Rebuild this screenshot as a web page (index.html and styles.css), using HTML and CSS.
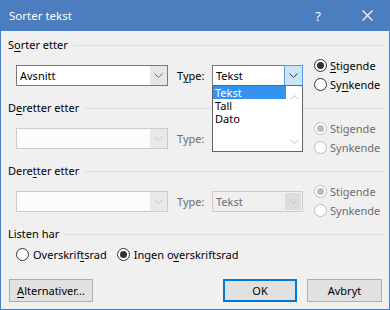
FILE: index.html
```html
<!DOCTYPE html>
<html lang="nb">
<head>
    <meta charset="UTF-8">
    <title>Sorter tekst</title>
    <link rel="stylesheet" href="styles.css">
</head>
<body>
    <div class="dialog">
        <div class="titlebar">
            <span class="title">Sorter tekst</span>
            <span class="help">?</span>
            <span class="close">
                <svg width="11" height="11" viewBox="0 0 11 11"><path d="M0.5 0.5 L10.5 10.5 M10.5 0.5 L0.5 10.5" stroke="#fff" stroke-width="1.1" fill="none"/></svg>
            </span>
        </div>

        <div class="content">
            <div class="group-head">S<u>o</u>rter etter</div>
            <div class="sort-row">
                <div class="combo">
                    <span class="combo-value">Avsnitt</span>
                    <span class="combo-btn"><svg width="9" height="5" viewBox="0 0 9 5"><polyline points="0.5,0.5 4.5,4.5 8.5,0.5" stroke="#707070" fill="none"/></svg></span>
                </div>
                <span class="type-label">T<u>y</u>pe:</span>
                <div class="combo combo-type combo-open">
                    <span class="combo-value">Tekst</span>
                    <span class="combo-btn"><svg width="9" height="5" viewBox="0 0 9 5"><polyline points="0.5,0.5 4.5,4.5 8.5,0.5" stroke="#3a3a3a" fill="none"/></svg></span>
                    <div class="dropdown">
                        <ul class="dropdown-items">
                            <li class="selected">Tekst</li>
                            <li>Tall</li>
                            <li>Dato</li>
                        </ul>
                        <div class="scrollbar">
                            <svg width="9" height="5" viewBox="0 0 9 5"><polyline points="0.5,4.5 4.5,0.5 8.5,4.5" stroke="#c2c2c2" fill="none"/></svg>
                            <svg width="9" height="5" viewBox="0 0 9 5"><polyline points="0.5,0.5 4.5,4.5 8.5,0.5" stroke="#c2c2c2" fill="none"/></svg>
                        </div>
                    </div>
                </div>
                <div class="order">
                    <div class="radio"><span class="dot checked"></span><span><u>S</u>tigende</span></div>
                    <div class="radio"><span class="dot"></span><span>Sy<u>n</u>kende</span></div>
                </div>
            </div>

            <div class="group-head spaced">D<u>e</u>retter etter</div>
            <div class="sort-row">
                <div class="combo disabled">
                    <span class="combo-value"></span>
                    <span class="combo-btn"><svg width="9" height="5" viewBox="0 0 9 5"><polyline points="0.5,0.5 4.5,4.5 8.5,0.5" stroke="#c4c4c4" fill="none"/></svg></span>
                </div>
                <span class="type-label disabled-text">Type:</span>
                <div class="combo combo-type disabled list-style">
                    <span class="combo-value">Tekst</span>
                    <span class="combo-btn"><svg width="9" height="5" viewBox="0 0 9 5"><polyline points="0.5,0.5 4.5,4.5 8.5,0.5" stroke="#c4c4c4" fill="none"/></svg></span>
                </div>
                <div class="order disabled-text">
                    <div class="radio"><span class="dot checked off"></span><span>Stigende</span></div>
                    <div class="radio"><span class="dot off"></span><span>Synkende</span></div>
                </div>
            </div>

            <div class="group-head spaced">Dere<u>t</u>ter etter</div>
            <div class="sort-row">
                <div class="combo disabled">
                    <span class="combo-value"></span>
                    <span class="combo-btn"><svg width="9" height="5" viewBox="0 0 9 5"><polyline points="0.5,0.5 4.5,4.5 8.5,0.5" stroke="#c4c4c4" fill="none"/></svg></span>
                </div>
                <span class="type-label disabled-text">Type:</span>
                <div class="combo combo-type disabled list-style">
                    <span class="combo-value">Tekst</span>
                    <span class="combo-btn"><svg width="9" height="5" viewBox="0 0 9 5"><polyline points="0.5,0.5 4.5,4.5 8.5,0.5" stroke="#c4c4c4" fill="none"/></svg></span>
                </div>
                <div class="order disabled-text">
                    <div class="radio"><span class="dot checked off"></span><span>Stigende</span></div>
                    <div class="radio"><span class="dot off"></span><span>Synkende</span></div>
                </div>
            </div>

            <div class="group-head spaced">Listen har</div>
            <div class="header-row">
                <div class="radio"><span class="dot"></span><span>Overskrif<u>t</u>srad</span></div>
                <div class="radio"><span class="dot checked"></span><span>Ingen o<u>v</u>erskriftsrad</span></div>
            </div>

            <div class="buttons">
                <button class="btn btn-options"><u>A</u>lternativer...</button>
                <button class="btn btn-ok">OK</button>
                <button class="btn btn-cancel">Avbryt</button>
            </div>
        </div>
    </div>
</body>
</html>
```

FILE: styles.css
```css
body {
    margin: 0;
    font-family: "Noto Sans", "Open Sans", sans-serif;
    font-size: 11px;
    color: #000;
    background-color: #f0f0f0;
}

.dialog {
    width: 390px;
    height: 310px;
    box-sizing: border-box;
    border: 1px solid #4b7dbf;
    border-top: none;
    background-color: #f0f0f0;
}

/* title bar */
.titlebar {
    height: 31px;
    margin: 0 -1px;
    background-color: #4b7dbf;
    color: #fff;
    display: flex;
    align-items: center;
}
.title {
    flex: 1;
    padding-left: 9px;
    font-size: 11.5px;
}
.help {
    width: 14px;
    font-size: 13px;
    margin-right: 37px;
    text-align: center;
}
.close {
    display: flex;
    margin-right: 17px;
}

.content {
    padding: 6px 5px 0 7px;
}

/* section headings with rule */
.group-head {
    display: flex;
    align-items: center;
    height: 16px;
    line-height: 16px;
}
.group-head::after {
    content: "";
    flex: 1;
    height: 1px;
    margin-left: 6px;
    background-color: #dcdcdc;
}
.group-head.spaced {
    margin-top: 6px;
}

u {
    text-decoration-thickness: 1px;
    text-underline-offset: 2px;
}

/* sort key rows */
.sort-row {
    display: flex;
    align-items: center;
    margin-top: 3px;
    padding-left: 8px;
}
.combo {
    position: relative;
    width: 152px;
    height: 21px;
    box-sizing: border-box;
    border: 1px solid #7a7a7a;
    background-color: #fff;
    display: flex;
}
.combo-value {
    flex: 1;
    padding-left: 3px;
    line-height: 19px;
}
.combo-btn {
    width: 17px;
    background-color: #e6e6e6;
    display: flex;
    align-items: center;
    justify-content: center;
}
.combo-type {
    width: 91px;
}
.combo-open .combo-btn {
    background-color: #cce4f7;
    border: 1px solid #569de5;
    margin: -1px -1px -1px 0;
}
.combo.disabled {
    border-color: #cccccc;
    background-color: #fcfcfc;
}
.combo.disabled .combo-btn {
    background-color: #e9e9e9;
}
.combo.list-style {
    background-color: #efefef;
    color: #6d6d6d;
}
.combo.list-style .combo-btn {
    background-color: #dcdcdc;
    margin: 1px;
    width: 16px;
}

.type-label {
    width: 35px;
    margin-left: 9px;
}
.disabled-text {
    color: #6d6d6d;
}

/* open dropdown list */
.dropdown {
    position: absolute;
    top: 19px;
    left: -1px;
    width: 91px;
    height: 67px;
    box-sizing: border-box;
    border: 1px solid #646464;
    background-color: #fff;
    display: flex;
    z-index: 2;
}
.dropdown-items {
    flex: 1;
    list-style: none;
    margin: 0;
    padding: 0;
}
.dropdown-items li {
    height: 13px;
    line-height: 13px;
    padding-left: 2px;
}
.dropdown-items li.selected {
    background-color: #3593f0;
    color: #fff;
}
.scrollbar {
    width: 16px;
    display: flex;
    flex-direction: column;
    align-items: center;
    justify-content: space-between;
    padding: 9px 0 7px;
}

/* radio buttons */
.order {
    margin-left: 11px;
    display: flex;
    flex-direction: column;
}
.radio {
    display: flex;
    align-items: center;
    gap: 3px;
    height: 19px;
}
.dot {
    width: 13px;
    height: 13px;
    box-sizing: border-box;
    border: 1px solid #333;
    border-radius: 50%;
    background-color: #fff;
    display: flex;
    align-items: center;
    justify-content: center;
}
.dot.checked::after {
    content: "";
    width: 7px;
    height: 7px;
    border-radius: 50%;
    background-color: #333;
}
.dot.off {
    border-color: #bcbcbc;
    background-color: #fff;
}
.dot.off.checked::after {
    background-color: #bcbcbc;
}

.header-row {
    display: flex;
    gap: 10px;
    margin-top: 3px;
    padding-left: 8px;
}
.header-row .radio {
    gap: 4px;
}

/* bottom buttons */
.buttons {
    display: flex;
    margin-top: 15px;
}
.btn {
    height: 23px;
    box-sizing: border-box;
    border: 1px solid #adadad;
    background-color: #e1e1e1;
    font-family: inherit;
    font-size: 11px;
    color: #000;
    padding: 0;
}
.btn-options {
    width: 84px;
    margin-left: 1px;
}
.btn-ok {
    width: 74px;
    margin-left: auto;
    border: 2px solid #0078d7;
}
.btn-cancel {
    width: 75px;
    margin-left: 10px;
    margin-right: 2px;
}
```
